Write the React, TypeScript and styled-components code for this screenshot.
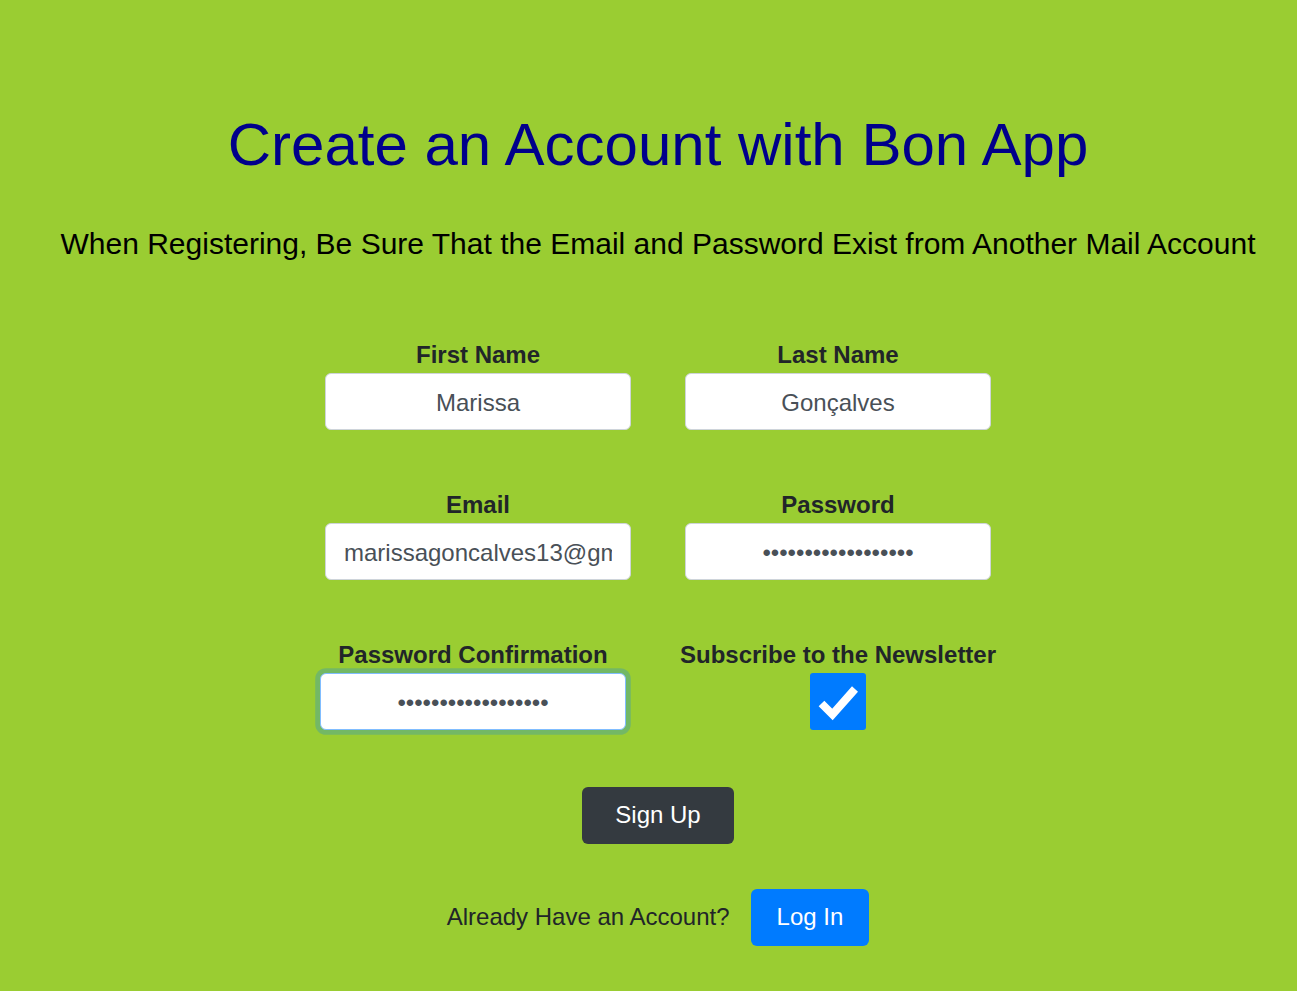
import React, { useState } from "react";
import styled, { createGlobalStyle } from "styled-components";

const GlobalStyle = createGlobalStyle`
  html, body {
    margin: 0;
    padding: 0;
    background-color: #9acd32;
  }
  body {
    font-family: "Liberation Sans", Arial, sans-serif;
    color: #212529;
  }
  * {
    box-sizing: border-box;
  }
`;

const Page = styled.main`
  min-height: 991px;
  background-color: #9acd32;
  display: flex;
  flex-direction: column;
  align-items: center;
  padding: 109px 0 40px 19px;
`;

const Title = styled.h1`
  margin: 0;
  font-size: 60px;
  font-weight: 400;
  line-height: 72px;
  color: #00008b;
  white-space: nowrap;
`;

const Subtitle = styled.p`
  margin: 45px 0 0;
  font-size: 30px;
  line-height: 36px;
  color: #000;
  white-space: nowrap;
`;

const Form = styled.form`
  margin-top: 79px;
  display: grid;
  grid-template-columns: 306px 306px;
  column-gap: 54px;
  row-gap: 61.5px;
`;

const Field = styled.div<{ $shift?: number }>`
  display: flex;
  flex-direction: column;
  align-items: center;
  margin-left: ${(p) => -(p.$shift ?? 0)}px;
  margin-right: ${(p) => p.$shift ?? 0}px;
`;

const Label = styled.label`
  display: block;
  font-size: 24px;
  font-weight: 700;
  line-height: 28px;
  margin-bottom: 3.5px;
  white-space: nowrap;
  color: #212529;
`;

const Input = styled.input<{ $focused?: boolean }>`
  width: 306px;
  height: 57px;
  padding: 11px 18px 7px;
  font-family: "Liberation Sans", Arial, sans-serif;
  font-size: 24px;
  line-height: 36px;
  text-align: center;
  color: #495057;
  background: #fff;
  border: 1.5px solid ${(p) => (p.$focused ? "#80bdff" : "#ced4da")};
  border-radius: 6px;
  outline: none;
  caret-color: #212529;
  box-shadow: ${(p) => (p.$focused ? "0 0 0 4.8px rgba(0, 123, 255, 0.25)" : "none")};
`;

const Check = styled.label`
  width: 56px;
  height: 57px;
  border-radius: 3px;
  background: #007bff;
  display: flex;
  align-items: center;
  justify-content: center;
  cursor: pointer;

  input {
    display: none;
  }
`;

const Actions = styled.div`
  margin-top: 57px;
  display: flex;
  flex-direction: column;
  align-items: center;
  gap: 45px;
`;

const Button = styled.button<{ $variant: "dark" | "primary"; $px: number }>`
  height: 57px;
  padding: 0 ${(p) => p.$px}px;
  border: none;
  border-radius: 6px;
  font-family: "Liberation Sans", Arial, sans-serif;
  font-size: 24px;
  color: #fff;
  cursor: pointer;
  background: ${(p) => (p.$variant === "dark" ? "#343a40" : "#007bff")};
`;

const LoginRow = styled.div`
  display: flex;
  align-items: center;
  gap: 21px;
  font-size: 24px;
  color: #212529;
`;

export default function App() {
  const [subscribed, setSubscribed] = useState(true);

  return (
    <>
      <GlobalStyle />
      <Page>
        <Title>Create an Account with Bon App</Title>
        <Subtitle>
          When Registering, Be Sure That the Email and Password Exist from Another Mail Account
        </Subtitle>
        <Form onSubmit={(e) => e.preventDefault()}>
          <Field>
            <Label htmlFor="first">First Name</Label>
            <Input id="first" defaultValue="Marissa" />
          </Field>
          <Field>
            <Label htmlFor="last">Last Name</Label>
            <Input id="last" defaultValue="Gonçalves" />
          </Field>
          <Field>
            <Label htmlFor="email">Email</Label>
            <Input id="email" style={{ textAlign: "left" }} defaultValue="marissagoncalves13@gmail.com" />
          </Field>
          <Field>
            <Label htmlFor="pass">Password</Label>
            <Input id="pass" type="password" defaultValue="marissa12345678901" />
          </Field>
          <Field $shift={5}>
            <Label htmlFor="confirm">Password Confirmation</Label>
            <Input id="confirm" type="password" $focused defaultValue="marissa12345678901" />
          </Field>
          <Field>
            <Label htmlFor="news">Subscribe to the Newsletter</Label>
            <Check htmlFor="news">
              <input
                id="news"
                type="checkbox"
                checked={subscribed}
                onChange={(e) => setSubscribed(e.target.checked)}
              />
              {subscribed && (
                <svg width="56" height="57" viewBox="0 0 56 57">
                  <polyline
                    points="11.5,30.5 22.5,41.5 45,16"
                    fill="none"
                    stroke="#fff"
                    strokeWidth="8"
                  />
                </svg>
              )}
            </Check>
          </Field>
        </Form>
        <Actions>
          <Button $variant="dark" $px={33}>Sign Up</Button>
          <LoginRow>
            <span>Already Have an Account?</span>
            <Button $variant="primary" $px={26}>Log In</Button>
          </LoginRow>
        </Actions>
      </Page>
    </>
  );
}
